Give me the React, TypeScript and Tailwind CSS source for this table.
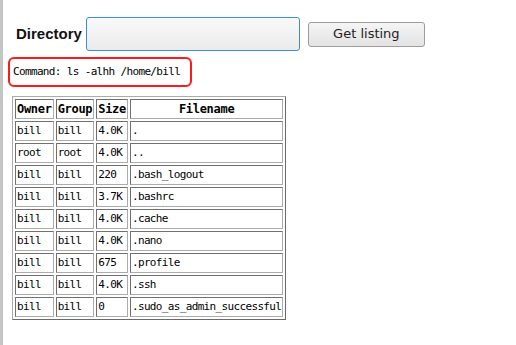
import React from "react"

const rows = [
  ["bill", "bill", "4.0K", "."],
  ["root", "root", "4.0K", ".."],
  ["bill", "bill", "220", ".bash_logout"],
  ["bill", "bill", "3.7K", ".bashrc"],
  ["bill", "bill", "4.0K", ".cache"],
  ["bill", "bill", "4.0K", ".nano"],
  ["bill", "bill", "675", ".profile"],
  ["bill", "bill", "4.0K", ".ssh"],
  ["bill", "bill", "0", ".sudo_as_admin_successful"],
]

const cell =
  "border border-t-[#707070] border-l-[#707070] border-b-[#ababab] border-r-[#ababab] p-px h-[20px] leading-[16px] whitespace-nowrap"

export default function App() {
  return (
    <div className="min-h-screen border-l-[3px] border-[#c4c4c4] bg-white text-black">
      <div className="pl-[5px] pt-[17px]">
        {/* Directory form */}
        <div className="flex items-center pl-[8px]">
          <label className="mr-[4px] text-[15px] font-bold font-['Liberation_Sans',Arial,sans-serif] text-[#111]">
            Directory
          </label>
          <input
            type="text"
            className="h-[34px] w-[214px] rounded-[3px] border border-[#3b8fd4] bg-gradient-to-b from-[#f9f9f9] to-[#ebebeb] outline-none"
          />
          <button className="ml-[8px] h-[25px] w-[117px] rounded-[3px] border border-[#9c9c9c] bg-gradient-to-b from-[#f5f5f5] to-[#e3e3e3] font-['DejaVu_Sans',sans-serif] text-[13px] text-[#222]">
            Get listing
          </button>
        </div>

        {/* Command */}
        <div className="mt-[6px] flex h-[30px] w-[184px] items-center rounded-[6px] border-2 border-[#ff1a1a] pl-[3px] font-['DejaVu_Sans_Mono',monospace] text-[11px] tracking-[-0.65px] text-black">
          Command: ls -alhh /home/bill
        </div>

        {/* Listing */}
        <table className="ml-[4px] mt-[9px] border-separate border-spacing-[2px] border border-t-[#ababab] border-l-[#ababab] border-b-[#6a6a6a] border-r-[#6a6a6a] font-['DejaVu_Sans_Mono',monospace] text-[11px] tracking-[-0.65px]">
          <thead>
            <tr>
              {["Owner", "Group", "Size", "Filename"].map((h) => (
                <th key={h} className={`${cell} text-center text-[12px] font-bold tracking-[-0.3px]`}>
                  {h}
                </th>
              ))}
            </tr>
          </thead>
          <tbody>
            {rows.map((r, i) => (
              <tr key={i}>
                {r.map((c, j) => (
                  <td key={j} className={`${cell} text-left`}>
                    {c}
                  </td>
                ))}
              </tr>
            ))}
          </tbody>
        </table>
      </div>
    </div>
  )
}
